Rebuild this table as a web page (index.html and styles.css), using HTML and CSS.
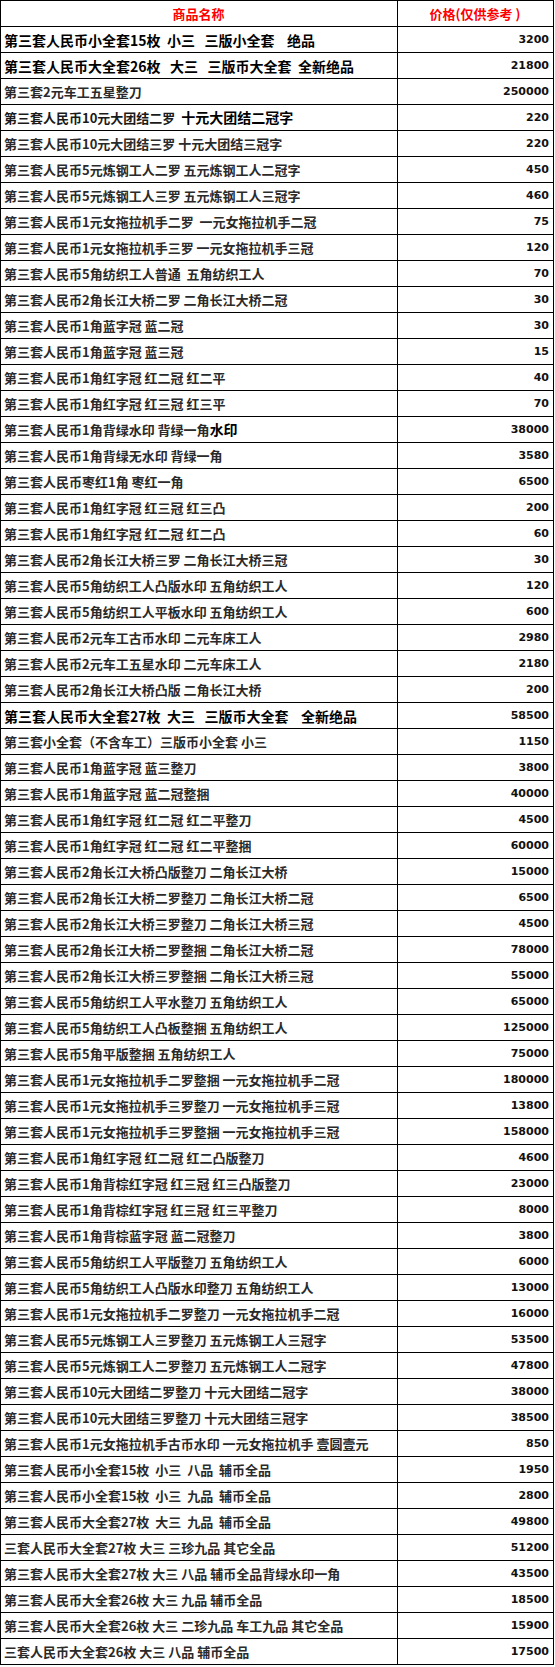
FILE: index.html
```html
<!DOCTYPE html>
<html lang="zh-CN">
<head>
<meta charset="utf-8">
<title>第三套人民币价格表</title>
<link rel="stylesheet" href="styles.css">
</head>
<body>
<table class="price-table">
<colgroup><col class="col-name"><col class="col-price"></colgroup>
<thead>
<tr><th class="h-name">商品名称</th><th class="h-price">价格(仅供参考 )</th></tr>
</thead>
<tbody>
<tr class="em"><td class="name">第三套人民币小全套15枚&nbsp;&nbsp;小三&nbsp;&nbsp;&nbsp;三版小全套&nbsp;&nbsp;&nbsp;&nbsp;绝品</td><td class="num">3200</td></tr>
<tr class="em"><td class="name">第三套人民币大全套26枚&nbsp;&nbsp;&nbsp;大三&nbsp;&nbsp;&nbsp;三版币大全套&nbsp;&nbsp;全新绝品</td><td class="num">21800</td></tr>
<tr><td class="name">第三套2元车工五星整刀</td><td class="num">250000</td></tr>
<tr><td class="name"><span class="dark">第三套人民币10元大团结二罗</span>&nbsp;&nbsp;<span class="strong">十元大团结二冠字</span></td><td class="num">220</td></tr>
<tr><td class="name">第三套人民币10元大团结三罗 十元大团结三冠字</td><td class="num">220</td></tr>
<tr><td class="name">第三套人民币5元炼钢工人二罗 五元炼钢工人二冠字</td><td class="num">450</td></tr>
<tr><td class="name">第三套人民币5元炼钢工人三罗 五元炼钢工人三冠字</td><td class="num">460</td></tr>
<tr><td class="name">第三套人民币1元女拖拉机手二罗&nbsp;&nbsp;一元女拖拉机手二冠</td><td class="num">75</td></tr>
<tr><td class="name">第三套人民币1元女拖拉机手三罗 一元女拖拉机手三冠</td><td class="num">120</td></tr>
<tr><td class="name">第三套人民币5角纺织工人普通&nbsp;&nbsp;五角纺织工人</td><td class="num">70</td></tr>
<tr><td class="name">第三套人民币2角长江大桥二罗 二角长江大桥二冠</td><td class="num">30</td></tr>
<tr><td class="name">第三套人民币1角蓝字冠 蓝二冠</td><td class="num">30</td></tr>
<tr><td class="name">第三套人民币1角蓝字冠 蓝三冠</td><td class="num">15</td></tr>
<tr><td class="name">第三套人民币1角红字冠 红二冠 红二平</td><td class="num">40</td></tr>
<tr><td class="name">第三套人民币1角红字冠 红三冠 红三平</td><td class="num">70</td></tr>
<tr><td class="name">第三套人民币1角背绿水印 背绿一角<span class="strong">水印</span></td><td class="num">38000</td></tr>
<tr><td class="name">第三套人民币1角背绿无水印 背绿一角</td><td class="num">3580</td></tr>
<tr><td class="name">第三套人民币枣红1角 枣红一角</td><td class="num">6500</td></tr>
<tr><td class="name">第三套人民币1角红字冠 红三冠 红三凸</td><td class="num">200</td></tr>
<tr><td class="name">第三套人民币1角红字冠 红二冠 红二凸</td><td class="num">60</td></tr>
<tr><td class="name">第三套人民币2角长江大桥三罗 二角长江大桥三冠</td><td class="num">30</td></tr>
<tr><td class="name">第三套人民币5角纺织工人凸版水印 五角纺织工人</td><td class="num">120</td></tr>
<tr><td class="name">第三套人民币5角纺织工人平板水印 五角纺织工人</td><td class="num">600</td></tr>
<tr><td class="name">第三套人民币2元车工古币水印 二元车床工人</td><td class="num">2980</td></tr>
<tr><td class="name">第三套人民币2元车工五星水印 二元车床工人</td><td class="num">2180</td></tr>
<tr><td class="name">第三套人民币2角长江大桥凸版 二角长江大桥</td><td class="num">200</td></tr>
<tr class="em"><td class="name">第三套人民币大全套27枚&nbsp;&nbsp;大三&nbsp;&nbsp;&nbsp;三版币大全套&nbsp;&nbsp;&nbsp;&nbsp;全新绝品</td><td class="num">58500</td></tr>
<tr><td class="name">第三套小全套（不含车工）三版币小全套 小三</td><td class="num">1150</td></tr>
<tr><td class="name">第三套人民币1角蓝字冠 蓝三整刀</td><td class="num">3800</td></tr>
<tr><td class="name">第三套人民币1角蓝字冠 蓝二冠整捆</td><td class="num">40000</td></tr>
<tr><td class="name">第三套人民币1角红字冠 红二冠 红二平整刀</td><td class="num">4500</td></tr>
<tr><td class="name">第三套人民币1角红字冠 红二冠 红二平整捆</td><td class="num">60000</td></tr>
<tr><td class="name">第三套人民币2角长江大桥凸版整刀 二角长江大桥</td><td class="num">15000</td></tr>
<tr><td class="name">第三套人民币2角长江大桥二罗整刀 二角长江大桥二冠</td><td class="num">6500</td></tr>
<tr><td class="name">第三套人民币2角长江大桥三罗整刀 二角长江大桥三冠</td><td class="num">4500</td></tr>
<tr><td class="name">第三套人民币2角长江大桥二罗整捆 二角长江大桥二冠</td><td class="num">78000</td></tr>
<tr><td class="name">第三套人民币2角长江大桥三罗整捆 二角长江大桥三冠</td><td class="num">55000</td></tr>
<tr><td class="name">第三套人民币5角纺织工人平水整刀 五角纺织工人</td><td class="num">65000</td></tr>
<tr><td class="name">第三套人民币5角纺织工人凸板整捆 五角纺织工人</td><td class="num">125000</td></tr>
<tr><td class="name">第三套人民币5角平版整捆 五角纺织工人</td><td class="num">75000</td></tr>
<tr><td class="name">第三套人民币1元女拖拉机手二罗整捆 一元女拖拉机手二冠</td><td class="num">180000</td></tr>
<tr><td class="name">第三套人民币1元女拖拉机手三罗整刀 一元女拖拉机手三冠</td><td class="num">13800</td></tr>
<tr><td class="name">第三套人民币1元女拖拉机手三罗整捆 一元女拖拉机手三冠</td><td class="num">158000</td></tr>
<tr><td class="name">第三套人民币1角红字冠 红二冠 红二凸版整刀</td><td class="num">4600</td></tr>
<tr><td class="name">第三套人民币1角背棕红字冠 红三冠 红三凸版整刀</td><td class="num">23000</td></tr>
<tr><td class="name">第三套人民币1角背棕红字冠 红三冠 红三平整刀</td><td class="num">8000</td></tr>
<tr><td class="name">第三套人民币1角背棕蓝字冠 蓝二冠整刀</td><td class="num">3800</td></tr>
<tr><td class="name">第三套人民币5角纺织工人平版整刀 五角纺织工人</td><td class="num">6000</td></tr>
<tr><td class="name">第三套人民币5角纺织工人凸版水印整刀 五角纺织工人</td><td class="num">13000</td></tr>
<tr><td class="name">第三套人民币1元女拖拉机手二罗整刀 一元女拖拉机手二冠</td><td class="num">16000</td></tr>
<tr><td class="name">第三套人民币5元炼钢工人三罗整刀 五元炼钢工人三冠字</td><td class="num">53500</td></tr>
<tr><td class="name">第三套人民币5元炼钢工人二罗整刀 五元炼钢工人二冠字</td><td class="num">47800</td></tr>
<tr><td class="name">第三套人民币10元大团结二罗整刀 十元大团结二冠字</td><td class="num">38000</td></tr>
<tr><td class="name">第三套人民币10元大团结三罗整刀 十元大团结三冠字</td><td class="num">38500</td></tr>
<tr><td class="name">第三套人民币1元女拖拉机手古币水印 一元女拖拉机手 壹圆壹元</td><td class="num">850</td></tr>
<tr><td class="name">第三套人民币小全套15枚&nbsp;&nbsp;小三&nbsp;&nbsp;八品&nbsp;&nbsp;辅币全品</td><td class="num">1950</td></tr>
<tr><td class="name">第三套人民币小全套15枚&nbsp;&nbsp;小三&nbsp;&nbsp;九品&nbsp;&nbsp;辅币全品</td><td class="num">2800</td></tr>
<tr><td class="name">第三套人民币大全套27枚&nbsp;&nbsp;大三&nbsp;&nbsp;九品&nbsp;&nbsp;辅币全品</td><td class="num">49800</td></tr>
<tr><td class="name">三套人民币大全套27枚 大三 三珍九品 其它全品</td><td class="num">51200</td></tr>
<tr><td class="name">第三套人民币大全套27枚 大三 八品 辅币全品背绿水印一角</td><td class="num">43500</td></tr>
<tr><td class="name">第三套人民币大全套26枚 大三 九品 辅币全品</td><td class="num">18500</td></tr>
<tr><td class="name">第三套人民币大全套26枚 大三 二珍九品 车工九品 其它全品</td><td class="num">15900</td></tr>
<tr><td class="name">三套人民币大全套26枚 大三 八品 辅币全品</td><td class="num">17500</td></tr>
</tbody>
</table>
</body>
</html>
```
FILE: styles.css
```css
html, body {
  margin: 0;
  padding: 0;
  background: #fff;
}

body {
  font-family: "Noto Sans CJK SC", "Noto Sans", sans-serif;
}

.price-table {
  border-collapse: collapse;
  width: 553px;
  table-layout: fixed;
}

.col-name { width: 397px; }
.col-price { width: 156px; }

.price-table th,
.price-table td {
  border: 1px solid #000;
  height: 26px;
  padding: 0 4px 0 3px;
  vertical-align: middle;
  white-space: nowrap;
  overflow: hidden;
  box-sizing: border-box;
  line-height: 16px;
}

.price-table th {
  color: #f00;
  font-size: 13px;
  font-weight: bold;
  text-align: center;
}

.name {
  color: #2a2a2a;
  font-size: 13px;
  font-weight: bold;
  text-align: left;
}

.num {
  color: #111;
  font-family: "DejaVu Sans", sans-serif;
  font-size: 11px;
  font-weight: bold;
  text-align: right;
}

.em .name {
  color: #000;
  font-size: 14px;
}

.dark {
  color: #1a1a1a;
}

.strong {
  color: #000;
  font-size: 14px;
}
```
